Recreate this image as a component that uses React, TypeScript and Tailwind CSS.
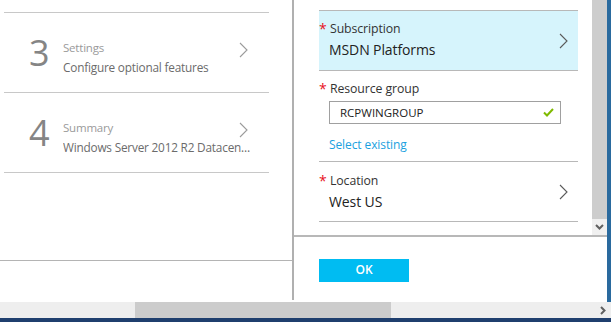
const font = { fontFamily: '"Open Sans", "Noto Sans", sans-serif' };

const Chevron = ({ className = "" }: { className?: string }) => (
  <svg width="9" height="16" viewBox="0 0 9 16" className={className}>
    <polyline points="1,1 8,8 1,15" fill="none" stroke="#5a5a5a" strokeWidth="1.1" />
  </svg>
);

const Step = ({ n, title, sub }: { n: string; title: string; sub: string }) => (
  <div className="flex h-[80px] w-[265px] items-center border-b border-[#c8c8c8] pl-[25px] pr-[18px]">
    <div className="w-[34px] text-[36px] leading-none text-[#858585]">{n}</div>
    <div className="min-w-0 flex-1 pt-[10px] tracking-[-0.2px]">
      <div className="flex items-start justify-between pr-[3px]">
        <div className="text-[11.5px] leading-[18px] text-[#9a9a9a]">{title}</div>
        <Chevron className="mt-[3px] shrink-0 opacity-60" />
      </div>
      <div className="-mt-[1px] truncate text-[11.8px] leading-[20px] text-[#6b6b6b]">{sub}</div>
    </div>
  </div>
);

const Field = ({ label }: { label: string }) => (
  <div className="flex items-start text-[12.3px] leading-[16px] tracking-[-0.1px] text-[#333]">
    <span className="w-[11px] text-[14px] text-[#e81123]">*</span>
    <span>{label}</span>
  </div>
);

export default function App() {
  return (
    <div className="flex h-[322px] w-[611px] flex-col overflow-hidden bg-white" style={font}>
      <div className="flex h-[302px]">
        {/* left blade */}
        <div className="flex w-[292px] flex-col">
          <div className="ml-[4px] mt-[12px] w-[265px] border-t border-[#c8c8c8]">
            <Step n="3" title="Settings" sub="Configure optional features" />
            <Step n="4" title="Summary" sub="Windows Server 2012 R2 Datacenter" />
          </div>
          <div className="mt-[86px] h-[2px] border-b border-[#b4b4b4]" />
        </div>
        <div className="h-[300px] w-[2px] bg-[#b0b0b0]" />

        {/* right blade */}
        <div className="flex flex-1 flex-col">
          <div className="flex h-[237px] border-b-2 border-[#b8b8b8]">
            <div className="flex-1 pl-[25px] pr-[14px] pt-[10px]">
              <div className="flex h-[61px] items-center border-y border-[#b8b8b8] bg-[#d6f4fc] pr-[10px]">
                <div className="flex-1 pb-[1px]">
                  <Field label="Subscription" />
                  <div className="mt-[4px] pl-[10px] text-[14px] leading-[18px] tracking-[-0.1px] text-[#222]">MSDN Platforms</div>
                </div>
                <Chevron />
              </div>
              <div className="pt-[10px]">
                <Field label="Resource group" />
                <div className="ml-[10px] mt-[4px] flex h-[23px] w-[232px] items-center border border-[#a0a0a0] pl-[10px] pr-[6px] text-[11.5px] text-[#222]">
                  <span className="flex-1">RCPWINGROUP</span>
                  <svg width="11" height="9" viewBox="0 0 11 9">
                    <polyline points="1,4.5 4,7.5 10,1" fill="none" stroke="#7fba00" strokeWidth="2" />
                  </svg>
                </div>
                <div className="ml-[10px] mt-[12px] text-[12px] tracking-[-0.1px] text-[#1aa1e0]">Select existing</div>
              </div>
              <div className="mt-[7px] flex h-[61px] items-center border-y border-[#b8b8b8] pr-[10px]">
                <div className="flex-1 pb-[0px]">
                  <Field label="Location" />
                  <div className="mt-[4px] pl-[10px] text-[14px] leading-[18px] tracking-[-0.1px] text-[#222]">West US</div>
                </div>
                <Chevron />
              </div>
            </div>
            {/* vertical scrollbar */}
            <div className="flex w-[15px] flex-col bg-[#f0f0f0]">
              <div className="h-[219px] bg-[#cdcdcd]" />
              <div className="flex flex-1 items-center justify-center">
                <svg width="9" height="6" viewBox="0 0 9 6">
                  <polyline points="1,1 4.5,4.5 8,1" fill="none" stroke="#606060" strokeWidth="2" />
                </svg>
              </div>
            </div>
          </div>
          <div className="pl-[25px] pt-[19px]">
            <button className="h-[23px] w-[90px] bg-[#00bcf2] text-[12px] font-semibold text-white">OK</button>
          </div>
        </div>
        <div className="w-[4px] bg-[#2a6a9e]" />
      </div>

      {/* horizontal scrollbar */}
      <div className="flex h-[16px] items-center bg-[#eeeeee]">
        <div className="ml-[135px] h-full w-[256px] bg-[#cccccc]" />
        <div className="flex-1" />
        <svg width="6" height="9" viewBox="0 0 6 9" className="mr-[5px]">
          <polyline points="1,1 4.5,4.5 1,8" fill="none" stroke="#606060" strokeWidth="2" />
        </svg>
      </div>
      <div className="h-[4px] bg-[#1f3f6e]" />
    </div>
  );
}
